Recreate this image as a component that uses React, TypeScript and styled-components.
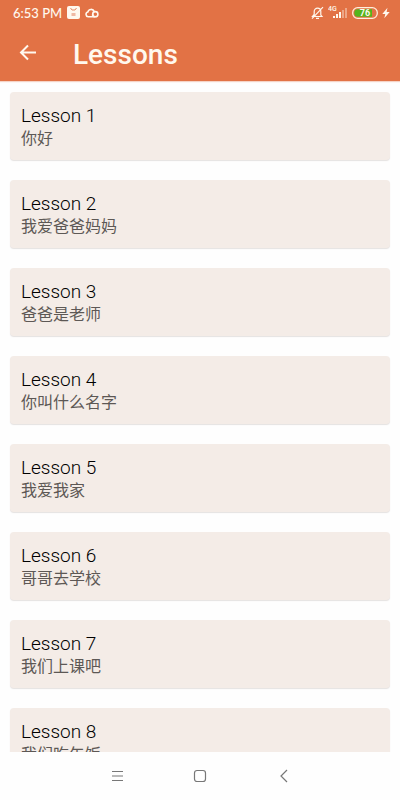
import React from "react";
import styled, { createGlobalStyle } from "styled-components";

const GlobalStyle = createGlobalStyle`
  * { box-sizing: border-box; }
  body {
    margin: 0;
    background: #fefefe;
    font-family: Roboto, "Noto Sans CJK SC", sans-serif;
  }
`;

const Screen = styled.div`
  display: flex;
  flex-direction: column;
  height: 100vh;
`;

const Header = styled.header`
  flex: none;
  background: #e27245;
  color: #fff8ee;
  box-shadow: 0 1px 1px rgba(226, 114, 69, 0.3);
  z-index: 1;
`;

const StatusBar = styled.div`
  display: flex;
  align-items: center;
  justify-content: space-between;
  height: 25px;
  padding: 0 10px 0 13px;
`;

const StatusGroup = styled.div<{ $gap: number }>`
  display: flex;
  align-items: center;
  gap: ${(p) => p.$gap}px;
`;

const Clock = styled.span`
  font: 500 13px/16px Lato, sans-serif;
`;

const AppBar = styled.div`
  display: flex;
  align-items: center;
  gap: 33px;
  height: 56px;
  padding: 0 16px;
`;

const IconButton = styled.button`
  display: flex;
  padding: 0;
  border: 0;
  background: none;
  color: inherit;
  cursor: pointer;
`;

const Title = styled.h1`
  margin: 0;
  padding-top: 4px;
  font-size: 28px;
  line-height: 32px;
  font-weight: 500;
`;

const LessonList = styled.main`
  display: flex;
  flex: 1;
  flex-direction: column;
  gap: 20px;
  min-height: 0;
  padding: 11px 10px;
  overflow-y: auto;
  scrollbar-width: none;
`;

const LessonCard = styled.button`
  flex: none;
  display: flex;
  flex-direction: column;
  padding: 12px 11px 10px;
  border: 0;
  border-radius: 4px;
  background: #f4ece7;
  box-shadow: 0 1px 1px rgba(80, 60, 50, 0.14);
  font-family: inherit;
  text-align: left;
  cursor: pointer;
`;

const LessonName = styled.span`
  color: #000;
  font-size: 19px;
  font-weight: 300;
  line-height: 24px;
`;

const LessonText = styled.span`
  color: #5d5855;
  font-size: 16px;
  line-height: 22px;
`;

const NavBar = styled.nav`
  flex: none;
  display: flex;
  align-items: center;
  justify-content: center;
  gap: 60px;
  height: 48px;
  background: #fefefe;
  color: #777;
`;

const lessons = [
  "你好",
  "我爱爸爸妈妈",
  "爸爸是老师",
  "你叫什么名字",
  "我爱我家",
  "哥哥去学校",
  "我们上课吧",
  "我们吃午饭",
];

const AppBadge = () => (
  <svg width="13" height="13" viewBox="0 0 13 13" aria-hidden="true">
    <rect width="13" height="13" rx="2" fill="#fff8ee" />
    <path d="M3.500 2 5 4h3l1.500-2" fill="none" stroke="#e58c68" />
    <path d="M4.500 7h4v3h-4z" fill="#efb9a3" />
  </svg>
);

const CloudIcon = () => (
  <svg width="14" height="10" viewBox="0 0 14 10" fill="none" stroke="currentColor" strokeWidth="1.600" aria-hidden="true">
    <path d="M10.500 8.800H3.200A2.400 2.400 0 0 1 2.800 4.100 3.400 3.400 0 0 1 9.300 3.600" />
    <circle cx="10.300" cy="6.200" r="2.600" />
    <path d="M7.700 6v2.800" />
  </svg>
);

const MutedBell = () => (
  <svg width="13" height="14" viewBox="0 0 13 14" fill="none" stroke="currentColor" strokeWidth="1.200" aria-hidden="true">
    <path d="M1.500 10.500h9.500L9.800 9V5.500A3.300 3.300 0 0 0 3.200 5.500V8.500ZM5 12.300h3M12 1.200 1 12.600" />
  </svg>
);

const Signal = () => (
  <svg width="20" height="14" viewBox="0 0 20 14" fill="currentColor" role="img" aria-label="4G signal">
    <text x="0" y="5" fontFamily="Roboto, sans-serif" fontSize="7" fontWeight="500">4G</text>
    <path d="M5 10h2v2H5zM8 8h2v4H8zM11 6h2v6h-2z" />
    <path d="M14 4h2v8h-2zM17 2h2v10h-2z" opacity=".4" />
  </svg>
);

const Battery = () => (
  <svg width="26" height="12" viewBox="0 0 26 12" role="img" aria-label="Battery">
    <rect x=".7" y=".7" width="24.600" height="10.600" rx="5" fill="#e27245" stroke="#fff0dc" strokeWidth="1.300" />
    <path d="M6 2.300h14v7.400H6a3.700 3.700 0 0 1 0-7.400Z" fill="#55b51c" />
    <text x="13" y="9" textAnchor="middle" fill="#fff8ee" fontFamily="Roboto, sans-serif" fontSize="9" fontWeight="700">76</text>
  </svg>
);

const Bolt = () => (
  <svg width="8" height="12" viewBox="0 0 8 12" fill="currentColor" aria-hidden="true">
    <path d="M5.500.8.300 7h3L2.300 11.300 7.700 5H4.600Z" />
  </svg>
);

export default function App() {
  return (
    <Screen>
      <GlobalStyle />
      <Header>
        <StatusBar>
          <StatusGroup $gap={5}>
            <Clock>6:53 PM</Clock>
            <AppBadge />
            <CloudIcon />
          </StatusGroup>
          <StatusGroup $gap={4}>
            <MutedBell />
            <Signal />
            <Battery />
            <Bolt />
          </StatusGroup>
        </StatusBar>
        <AppBar>
          <IconButton aria-label="Back">
            <svg width="24" height="24" viewBox="0 0 24 24" fill="none" stroke="currentColor" strokeWidth="2">
              <path d="M20 11.500H5M12 4.500 5 11.500l7 7" />
            </svg>
          </IconButton>
          <Title>Lessons</Title>
        </AppBar>
      </Header>
      <LessonList>
        {lessons.map((text, i) => (
          <LessonCard key={i}>
            <LessonName>Lesson {i + 1}</LessonName>
            <LessonText lang="zh-CN">{text}</LessonText>
          </LessonCard>
        ))}
      </LessonList>
      <NavBar>
        <IconButton aria-label="Menu">
          <svg width="24" height="24" viewBox="0 0 24 24" fill="none" stroke="currentColor">
            <path d="M8 7.500h11M8 12h11M8 16.500h11" />
          </svg>
        </IconButton>
        <IconButton aria-label="Home">
          <svg width="24" height="24" viewBox="0 0 24 24" fill="none" stroke="currentColor" strokeWidth="1.200">
            <rect x="6.500" y="6.500" width="11" height="11" rx="2.500" />
          </svg>
        </IconButton>
        <IconButton aria-label="Back">
          <svg width="24" height="24" viewBox="0 0 24 24" fill="none" stroke="currentColor" strokeWidth="1.200">
            <path d="M15 6 9 12l6 6" />
          </svg>
        </IconButton>
      </NavBar>
    </Screen>
  );
}
